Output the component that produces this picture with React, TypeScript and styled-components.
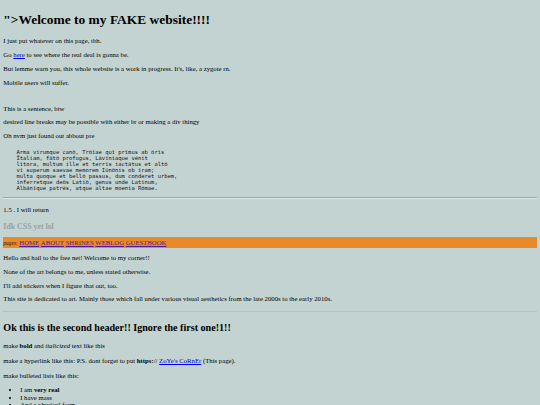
import React from "react";
import styled, { createGlobalStyle } from "styled-components";

const Global = createGlobalStyle`
  html, body { margin: 0; padding: 0; background: #c3d3d1; }
  body { font-family: "Liberation Serif", "Times New Roman", serif; }
`;

const Page = styled.main`
  font-size: 6.72px;
  color: #000;
  padding: 0.5em;
  overflow: hidden;
  height: 405px;
  box-sizing: border-box;
`;

const Title = styled.h1`
  font-family: "Liberation Serif", "Times New Roman", serif;
  font-size: 2em;
  font-weight: 700;
  margin: 0.67em 0;
  color: #000;
`;

const Para = styled.p<{ $spaced?: boolean; $loose?: boolean }>`
  margin: ${(p) => (p.$loose ? "1.25em 0 1em" : "1em 0")};
  ${(p) => (p.$spaced ? "margin-top: 2.85em;" : "")}
`;

const Link = styled.a<{ $visited?: boolean }>`
  color: ${(p) => (p.$visited ? "#551a8b" : "#0000ee")};
  text-decoration: underline;
`;

const Pre = styled.pre`
  font-family: "DejaVu Sans Mono", monospace;
  font-size: 0.8125em;
  margin: 1.9em 0 1em;
  color: #111;
`;

const Rule = styled.hr<{ $soft?: boolean }>`
  border: none;
  height: 0;
  ${(p) =>
    p.$soft
      ? "margin: 1.3em 0 0.6em; border-top: 1px solid #b3c3c1;"
      : "margin: 0.5em 0; border-top: 1px solid #9aa8a6; border-bottom: 1px solid #dde8e6;"}
`;

const SubHeading = styled.h3`
  font-family: "Liberation Serif", "Times New Roman", serif;
  font-size: 1.17em;
  font-weight: 700;
  color: #9aa1a0;
  margin: 1.25em 0 0.65em;
`;

const NavBar = styled.nav`
  background: #e8892a;
  padding: 0.3em 0;
  display: flex;
  align-items: baseline;
  gap: 0.25em;
`;

const NavLabel = styled.span`
  font-size: 0.8em;
  font-style: italic;
  color: #222;
`;

const Header2 = styled.h2`
  font-family: "Liberation Serif", "Times New Roman", serif;
  font-size: 1.5em;
  font-weight: 700;
  margin: 1em 0 0.52em;
  color: #000;
`;

const List = styled.ul`
  margin: 1em 0;
  padding-left: 2.5em;
  list-style: disc;
  line-height: 1.1;
`;

const Item = styled.li``;

const poem = [
  "Arma virumque canō, Trōiae quī prīmus ab ōrīs",
  "Ītaliam, fātō profugus, Lāvīniaque vēnit",
  "lītora, multum ille et terrīs iactātus et altō",
  "vī superum saevae memorem Iūnōnis ob īram;",
  "multa quoque et bellō passus, dum conderet urbem,",
  "inferretque deōs Latiō, genus unde Latīnum,",
  "Albānīque patrēs, atque altae moenia Rōmae.",
];

const navItems = ["HOME", "ABOUT", "SHRINES", "WEBLOG", "GUESTBOOK"];

export default function App() {
  return (
    <>
      <Global />
      <Page>
        <Title>"&gt;Welcome to my FAKE website!!!!</Title>
        <Para>I just put whatever on this page, tbh.</Para>
        <Para>
          Go <Link href="#">here</Link> to see where the real deal is gonna be.
        </Para>
        <Para>
          But lemme warn you, this whole website is a work in progress. It's, like, a zygote rn.
        </Para>
        <Para>Mobile users will suffer.</Para>
        <Para $spaced>This is a sentence, btw</Para>
        <Para>desired line breaks may be possible with either br or making a div thingy</Para>
        <Para>Oh nvm just found out abbout pre</Para>
        <Pre>{poem.map((l) => "    " + l).join("\n")}</Pre>
        <Rule />
        <Para>1.5 . I will return</Para>
        <SubHeading>Idk CSS yet lol</SubHeading>
        <NavBar>
          <NavLabel>pages:</NavLabel>
          {navItems.map((n) => (
            <Link key={n} href="#" $visited>
              {n}
            </Link>
          ))}
        </NavBar>
        <Para>Hello and hail to the free net! Welcome to my corner!!</Para>
        <Para>None of the art belongs to me, unless stated otherwise.</Para>
        <Para>I'll add stickers when I figure that out, too.</Para>
        <Para>
          This site is dedicated to art. Mainly those which fall under various visual aesthetics from the late 2000s to the early 2010s.
        </Para>
        <Rule $soft />
        <Header2>Ok this is the second header!! Ignore the first one!1!!</Header2>
        <Para $loose>
          make <b>bold</b> and <i>italicized</i> text like this
        </Para>
        <Para $loose>
          make a hyperlink like this: P.S. dont forget to put <b>https:</b>// <Link href="#">ZoYe's CoRnEr</Link> (This page).
        </Para>
        <Para $loose>make bulleted lists like this:</Para>
        <List>
          <Item>
            I am <b>very real</b>
          </Item>
          <Item>I have mass</Item>
          <Item>And a physical form</Item>
        </List>
      </Page>
    </>
  );
}
